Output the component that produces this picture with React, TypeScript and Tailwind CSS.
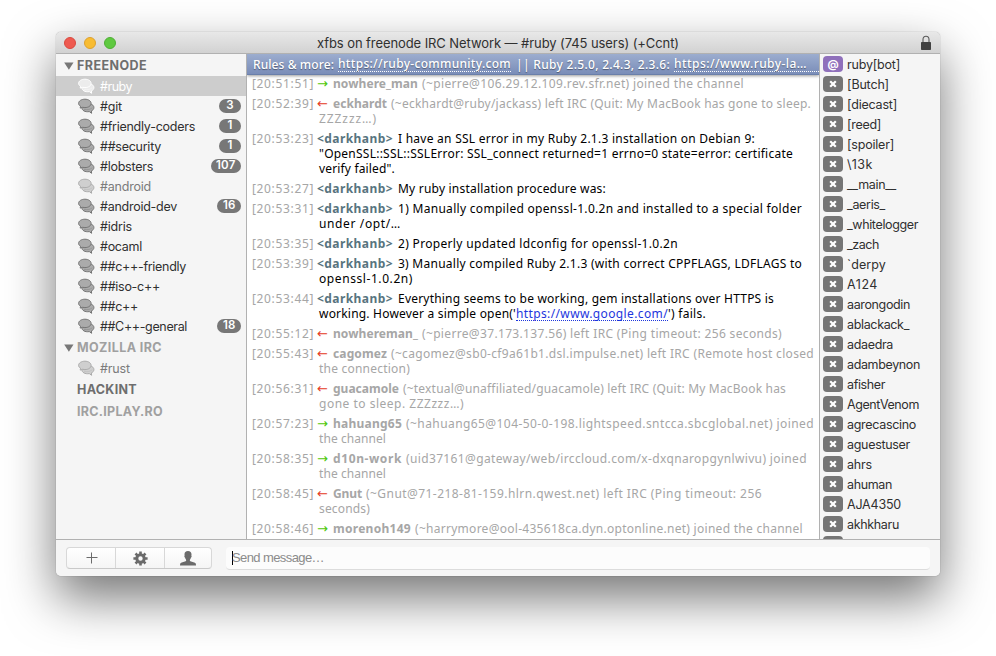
import { useLayoutEffect, useRef, useState } from "react";

/** Single-line text whose tracking is adjusted so that it fills `w` pixels. */
function Fit({ w, className = "", children }: { w: number; className?: string; children: string }) {
  const ref = useRef<HTMLSpanElement>(null);
  const [spacing, setSpacing] = useState(0);
  useLayoutEffect(() => {
    const el = ref.current;
    if (el && children.length > 0) setSpacing((w - el.getBoundingClientRect().width) / children.length);
  }, [w, children]);
  return (
    <span
      ref={ref}
      className={`inline-block whitespace-pre ${className}`}
      style={{ letterSpacing: `${spacing}px` }}
    >
      {children}
    </span>
  );
}

type Channel = { name: string; w: number; badge?: string; selected?: boolean; dim?: boolean };

const freenode: Channel[] = [
  { name: "#ruby", w: 32, selected: true },
  { name: "#git", w: 22, badge: "3" },
  { name: "#friendly-coders", w: 95, badge: "1" },
  { name: "##security", w: 61, badge: "1" },
  { name: "#lobsters", w: 53, badge: "107" },
  { name: "#android", w: 51, dim: true },
  { name: "#android-dev", w: 77, badge: "16" },
  { name: "#idris", w: 32 },
  { name: "#ocaml", w: 42 },
  { name: "##c++-friendly", w: 86 },
  { name: "##iso-c++", w: 60 },
  { name: "##c++", w: 38 },
  { name: "##C++-general", w: 87, badge: "18" },
];

type Message = { time: string; kind: "join" | "quit" | "say"; nick: string; nw: number; text: string; w: number; more?: [string, number][]; link?: boolean };

const messages: Message[] = [
  { time: "20:51:51", kind: "join", nick: "nowhere_man", nw: 85, text: "(~pierre@106.29.12.109.rev.sfr.net) joined the channel", w: 322 },
  { time: "20:52:39", kind: "quit", nick: "eckhardt", nw: 54, text: "(~eckhardt@ruby/jackass) left IRC (Quit: My MacBook has gone to sleep.", w: 420, more: [["ZZZzzz…)", 58]] },
  { time: "20:53:23", kind: "say", nick: "<darkhanb>", nw: 76, text: "I have an SSL error in my Ruby 2.1.3 installation on Debian 9:", w: 357, more: [['"OpenSSL::SSL::SSLError: SSL_connect returned=1 errno=0 state=error: certificate', 474], ['verify failed".', 76]] },
  { time: "20:53:27", kind: "say", nick: "<darkhanb>", nw: 76, text: "My ruby installation procedure was:", w: 208 },
  { time: "20:53:31", kind: "say", nick: "<darkhanb>", nw: 76, text: "1) Manually compiled openssl-1.0.2n and installed to a special folder", w: 404, more: [["under /opt/…", 82]] },
  { time: "20:53:35", kind: "say", nick: "<darkhanb>", nw: 76, text: "2) Properly updated ldconfig for openssl-1.0.2n", w: 280 },
  { time: "20:53:39", kind: "say", nick: "<darkhanb>", nw: 76, text: "3) Manually compiled Ruby 2.1.3 (with correct CPPFLAGS, LDFLAGS to", w: 404, more: [["openssl-1.0.2n)", 94]] },
  { time: "20:53:44", kind: "say", nick: "<darkhanb>", nw: 76, text: "Everything seems to be working, gem installations over HTTPS is", w: 376, link: true },
  { time: "20:55:12", kind: "quit", nick: "nowhereman_", nw: 85, text: "(~pierre@37.173.137.56) left IRC (Ping timeout: 256 seconds)", w: 360 },
  { time: "20:55:43", kind: "quit", nick: "cagomez", nw: 54, text: "(~cagomez@sb0-cf9a61b1.dsl.impulse.net) left IRC (Remote host closed", w: 423, more: [["the connection)", 91]] },
  { time: "20:56:31", kind: "quit", nick: "guacamole", nw: 66, text: "(~textual@unaffiliated/guacamole) left IRC (Quit: My MacBook has", w: 383, more: [["gone to sleep. ZZZzzz…)", 145]] },
  { time: "20:57:23", kind: "join", nick: "hahuang65", nw: 69, text: "(~hahuang65@104-50-0-198.lightspeed.sntcca.sbcglobal.net) joined", w: 408, more: [["the channel", 67]] },
  { time: "20:58:35", kind: "join", nick: "d10n-work", nw: 69, text: "(uid37161@gateway/web/irccloud.com/x-dxqnaropgynlwivu) joined", w: 401, more: [["the channel", 67]] },
  { time: "20:58:45", kind: "quit", nick: "Gnut", nw: 29, text: "(~Gnut@71-218-81-159.hlrn.qwest.net) left IRC (Ping timeout: 256", w: 396, more: [["seconds)", 51]] },
  { time: "20:58:46", kind: "join", nick: "morenoh149", nw: 78, text: "(~harrymore@ool-435618ca.dyn.optonline.net) joined the channel", w: 388 },
];

const users: [string, number][] = [
  ["ruby[bot]", 53], ["[Butch]", 42], ["[diecast]", 50], ["[reed]", 34], ["[spoiler]", 47],
  ["\\13k", 26], ["__main__", 49], ["_aeris_", 38], ["_whitelogger", 71], ["_zach", 32],
  ["`derpy", 39], ["A124", 31], ["aarongodin", 63], ["ablackack_", 62], ["adaedra", 46],
  ["adambeynon", 73], ["afisher", 38], ["AgentVenom", 72], ["agrecascino", 69],
  ["aguestuser", 63], ["ahrs", 25], ["ahuman", 45], ["AJA4350", 54], ["akhkharu", 52], ["", 0],
];

function Bubbles({ tone }: { tone: "dark" | "light" | "white" }) {
  const fill = tone === "white" ? "#ececec" : tone === "light" ? "#cfcfcf" : "#ababab";
  const stroke = tone === "white" ? "#ffffff" : tone === "light" ? "#ababab" : "#747474";
  return (
    <svg width="17" height="17" viewBox="0 0 17 17" className="shrink-0" fill={fill} stroke={stroke} strokeWidth="1" strokeLinejoin="round">
      <path d="M3.800 9.500c0-2.300 2.600-4 6-4s6.100 1.700 6.100 4c0 1.500-.9 2.700-2.500 3.400l.2 2.400-2.300-1.700c-4.300.7-7.500-1.200-7.500-4.100Z" />
      <path d="M.6 5.400C.6 3 3.300 1.200 6.900 1.200s6.200 1.800 6.200 4.200-2.600 4.200-6.200 4.200c-.8 0-1.600-.1-2.300-.3l-2.400.8.300-1.900C1.300 7.500.6 6.500.6 5.400Z" />
      <path d="M6 11.300c2.800.9 6 .3 8.300-1.500" fill="none" strokeOpacity=".35" />
    </svg>
  );
}

function Server({ name, w, open, dim }: { name: string; w: number; open?: boolean; dim?: boolean }) {
  return (
    <div className="flex h-[22px] items-center pt-0.5 pl-2">
      <span className="flex w-[13px]">
        {open && (
          <svg width="10" height="8" viewBox="0 0 10 8" fill="#777777"><path d="M.2.400h9.300L4.900 7.800Z" /></svg>
        )}
      </span>
      <Fit w={w} className={`text-[12.5px] font-bold ${dim ? "text-[#a0a0a0]" : "text-[#6e6e6e]"}`}>{name}</Fit>
    </div>
  );
}

function ChannelRow({ name, w, badge, selected, dim }: Channel) {
  const color = selected ? "text-white" : dim ? "text-[#7b7b7b]" : "text-[#303030]";
  return (
    <div className={`flex h-5 items-center pr-[5px] pl-[22px] ${selected ? "bg-[#cdcdcd]" : ""}`}>
      <Bubbles tone={selected ? "white" : dim ? "light" : "dark"} />
      <Fit w={w} className={`ml-[5px] pt-0.5 text-[12.5px] ${color}`}>{name}</Fit>
      {badge && (
        <span className="ml-auto flex h-[14px] min-w-[22px] items-center justify-center rounded-full bg-[#777777] px-[5.500px] text-[11.5px] leading-none font-semibold tracking-[0.2px] text-white">
          {badge}
        </span>
      )}
    </div>
  );
}

function MessageRow({ m }: { m: Message }) {
  const say = m.kind === "say";
  return (
    <div className={`pl-[5px] ${say ? "text-black" : "text-[#a6a6a6]"}`}>
      <div className="flex h-[15px] items-center">
        <Fit w={62} className="mr-[3px] text-[#a6a6a6]">{`[${m.time}]`}</Fit>
        {!say && (
          <span className={`w-4 font-['DejaVu_Sans'] text-[13px] leading-[15px] ${m.kind === "join" ? "text-[#4fc80a]" : "text-[#e63b25]"}`}>
            {m.kind === "join" ? "→" : "←"}
          </span>
        )}
        <Fit w={m.nw} className={`font-bold ${say ? "mr-[5px] text-[#58747e]" : "mr-1"}`}>{m.nick}</Fit>
        <Fit w={m.w}>{m.text}</Fit>
      </div>
      {m.more?.map(([line, w]) => (
        <div key={line} className="flex h-[15px] items-center pl-[67px]">
          <Fit w={w}>{line}</Fit>
        </div>
      ))}
      {m.link && (
        <div className="flex h-[15px] items-center pl-[67px]">
          <Fit w={197}>{"working. However a simple open('"}</Fit>
          <Fit w={152} className="h-[15px] border-b border-dotted border-[#1d36dd] text-[#1d36dd]">https://www.google.com/</Fit>
          <Fit w={38}>{"') fails."}</Fit>
        </div>
      )}
    </div>
  );
}

export default function App() {
  return (
    <div className="h-[656px] w-[996px] overflow-hidden bg-white px-14 pt-8 font-[Inter,sans-serif]">
      <div className="flex h-[544px] w-[884px] flex-col overflow-hidden rounded-[5px] bg-[#f5f5f5] shadow-[0_0_1px_rgba(0,0,0,0.5),0_22px_50px_rgba(0,0,0,0.54)]">
        <header className="flex h-[22px] shrink-0 items-center border-b border-[#b1b1b1] bg-linear-to-b from-[#e8e8e8] to-[#d2d2d2] px-2">
          <div className="flex w-[253px] gap-2">
            <i className="size-3 rounded-full border border-[#d9493f] bg-[#ee5a50]" />
            <i className="size-3 rounded-full border border-[#dca02f] bg-[#f8bc32]" />
            <i className="size-3 rounded-full border border-[#4fae35] bg-[#5fc940]" />
          </div>
          <Fit w={362} className="pt-0.5 text-[13px] text-[#303030]">xfbs on freenode IRC Network — #ruby (745 users) (+Ccnt)</Fit>
          <svg className="ml-auto" width="12" height="15" viewBox="0 0 12 15">
            <path d="M3 7.500V4.500a3 3.300 0 0 1 6 0V7.500" fill="none" stroke="#5a5a5a" strokeWidth="1.100" />
            <rect x="1" y="7" width="10" height="8" rx=".8" fill="#424242" />
          </svg>
        </header>

        <main className="flex h-[485px] shrink-0">
          <aside className="w-[191px] shrink-0 overflow-hidden border-r border-[#b1b1b1]">
            <Server name="FREENODE" w={70} open />
            {freenode.map((c) => <ChannelRow key={c.name} {...c} />)}
            <Server name="MOZILLA IRC" w={85} open dim />
            <ChannelRow name="#rust" w={30} dim />
            <Server name="HACKINT" w={60} />
            <Server name="IRC.IPLAY.RO" w={86} dim />
          </aside>

          <section className="flex w-[573px] shrink-0 flex-col overflow-hidden border-r border-[#b1b1b1] bg-white font-['Noto_Sans',sans-serif] text-[12px] leading-[15px] [font-variant-ligatures:none]">
            <div className="z-10 flex h-[21px] shrink-0 items-center overflow-hidden border-b border-[#6b80aa] bg-linear-to-b from-[#9cadcf] to-[#7a8db8] pl-1.5 text-white shadow-[0_1px_3px_rgba(0,0,0,0.4)] [text-shadow:0_1px_1px_rgba(0,0,0,0.4)]">
              <Fit w={81} className="mr-1 font-medium">{"Rules & more:"}</Fit>
              <Fit w={173} className="mr-[5px] border-b border-dotted border-white font-medium">https://ruby-community.com</Fit>
              <Fit w={154} className="mr-1 font-medium">|| Ruby 2.5.0, 2.4.3, 2.3.6:</Fit>
              <span className="flex grow border-b border-dotted border-white">
                <Fit w={133} className="font-medium">https://www.ruby-la…</Fit>
              </span>
            </div>
            <div className="flex flex-col gap-[5px] pt-px">
              {messages.map((m) => <MessageRow key={m.time} m={m} />)}
            </div>
          </section>

          <aside className="min-w-0 grow overflow-hidden">
            {users.map(([name, w], i) => (
              <div key={name} className="flex h-5 items-center pl-[3px]">
                <span className={`flex h-4 w-5 items-center justify-center rounded-[4px] ${i === 0 ? "bg-[#8f70bb]" : "bg-[#757575]"}`}>
                  {i === 0 ? (
                    <span className="text-[11px] leading-none font-bold text-white">@</span>
                  ) : (
                    <svg width="8" height="8" viewBox="0 0 8 8" stroke="#fff" strokeWidth="2.200"><path d="m1.200 1.200 5.600 5.600M6.800 1.200 1.200 6.800" /></svg>
                  )}
                </span>
                <Fit w={w} className="ml-1 pt-0.5 text-[12.5px] text-[#303030]">{name}</Fit>
              </div>
            ))}
          </aside>
        </main>

        <footer className="flex h-[37px] shrink-0 items-center border-t border-[#b1b1b1] bg-[#f5f5f5] pr-2.5 pl-2.5">
          <div className="flex h-[22px] w-[146px] rounded-[4px] border border-[#d8d8d8] border-b-[#c9c9c9] bg-linear-to-b from-white to-[#f5f5f5] text-[#6b6b6b]">
            <span className="flex w-[49px] items-center justify-center border-r border-[#d8d8d8]">
              <svg width="12" height="12" viewBox="0 0 12 12" stroke="currentColor" className="ml-px"><path d="M.5 5.500h11M5.500.500v11" /></svg>
            </span>
            <span className="flex w-[49px] items-center justify-center border-r border-[#d8d8d8]">
              <svg width="15" height="15" viewBox="0 0 15 15" fill="none" stroke="currentColor">
                <circle cx="7.500" cy="7.500" r="3.700" strokeWidth="3" />
                <path d="M7.500.400v3M7.500 11.600v3M.4 7.500h3M11.600 7.500h3M2.500 2.500l2.100 2.100M10.400 10.400l2.100 2.100M12.500 2.500l-2.100 2.100M4.600 10.400l-2.100 2.100" strokeWidth="2.600" />
              </svg>
            </span>
            <span className="flex grow items-center justify-center">
              <svg width="16" height="15" viewBox="0 0 16 15" fill="currentColor">
                <path d="M8 0c2.300 0 3.600 1.300 3.500 3.400 0 .8-.1 1-.1 1.300.5.500.2 1.600-.4 1.900-.2 1-.6 1.600-1.100 2.100v1.200c1.200.9 4.400 1.300 5.500 2.200.4.400.6 1.300.6 2.400H0c0-1.100.2-2 .6-2.400 1.100-.9 4.300-1.300 5.500-2.200V8.700C5.600 8.200 5.200 7.600 5 6.600c-.6-.3-.9-1.400-.4-1.900 0-.3-.1-.5-.1-1.300C4.400 1.300 5.700 0 8 0Z" />
              </svg>
            </span>
          </div>
          <div className="ml-3.5 flex h-[23px] grow items-center rounded-[4px] border-b border-[#dcdcdc] bg-[#fcfcfc] pl-1.5">
            <i className="h-[14px] w-px bg-black" />
            <Fit w={92} className="-ml-px font-['Liberation_Sans',sans-serif] text-[13px] text-[#8b8b8b]">Send message…</Fit>
          </div>
        </footer>
      </div>
    </div>
  );
}
